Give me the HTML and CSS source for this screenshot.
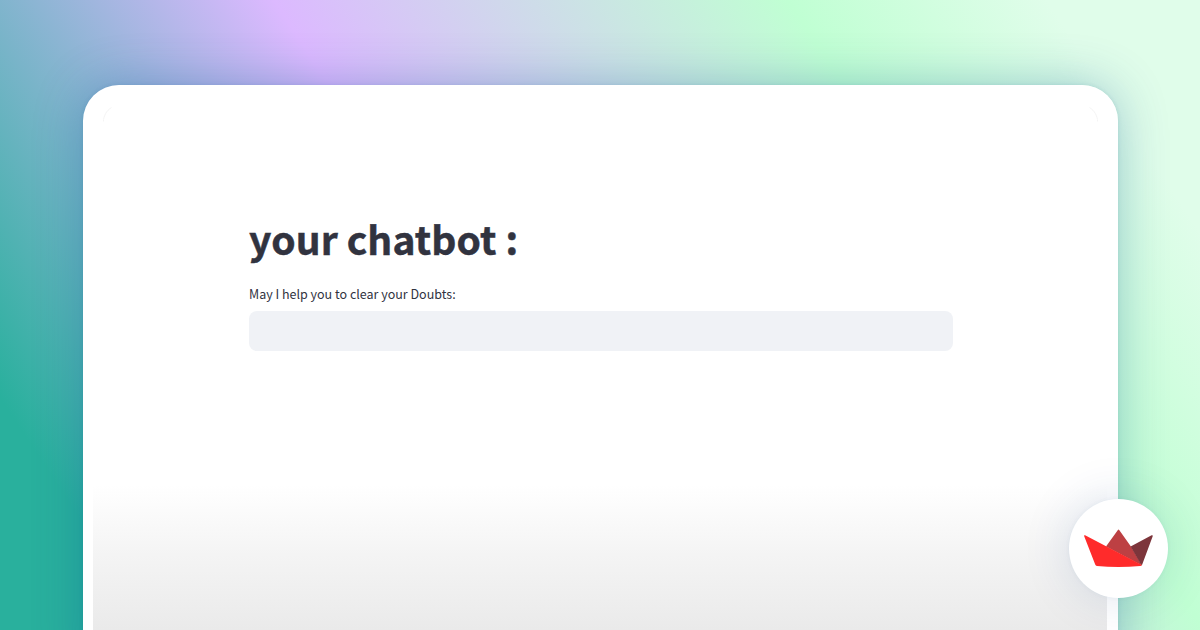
FILE: index.html
```html
<!DOCTYPE html>
<html lang="en">
<head>
    <meta charset="UTF-8">
    <meta name="viewport" content="width=device-width, initial-scale=1.0">
    <title>your chatbot</title>
    <link rel="stylesheet" href="styles.css">
</head>
<body>
    <div class="card">
        <svg class="corner corner-left" width="10" height="16" viewBox="0 0 10 16">
            <path d="M0.5 14.5 C0.5 9 3.5 3.5 8.5 0.5" />
        </svg>
        <svg class="corner corner-right" width="10" height="16" viewBox="0 0 10 16">
            <path d="M9.5 14.5 C9.5 9 6.5 3.5 1.5 0.5" />
        </svg>

        <main class="content">
            <h1>your chatbot :</h1>
            <label class="question-label" for="question">May I help you to clear your Doubts:</label>
            <input class="question" id="question" type="text">
        </main>
    </div>

    <div class="badge">
        <svg class="crown" width="70" height="40" viewBox="0 0 70 40">
            <path fill="#bd4043" d="M33.9 1 Q34.5 0.1 35.2 1 L47.1 17.8 L58 36.5 L22 17.6 Z" />
            <path fill="#7d353b" d="M46.6 17.5 L67.6 6.3 Q69.1 5.9 68.7 7.2 L58.2 35.4 Q57.8 36.5 57 35.5 Z" />
            <path fill="#ff2b2b" d="M0.2 7.2 Q-0.3 5.8 1.1 6.3 L22.1 17.3 L57.9 36 Q57.5 36.8 56.2 37 Q34.2 39 12.9 37 Q11.7 36.8 11.2 35.6 Z" />
        </svg>
    </div>
</body>
</html>
```
FILE: styles.css
```css
* {
    box-sizing: border-box;
}

html {
    overflow: hidden;
}

body {
    position: relative;
    width: 1200px;
    height: 630px;
    margin: 0;
    padding: 85px 82px 0 83px;
    overflow: hidden;
    font-family: "Source Sans Pro", "Noto Sans CJK SC", sans-serif;
    color: #31333f;
    background: linear-gradient(56.5deg, #29b09d 9.5%, #dcb9ff 42.7%, #c0ffd3 74.5%, #e0fdea 90.5%);
}

.card {
    position: relative;
    height: 600px;
    border: 10px solid #fff;
    border-right-width: 11px;
    border-radius: 36px;
    background: linear-gradient(to bottom, #fff 390px, #f4f4f4 460px, #eaeaea 535px);
    box-shadow: 0 0 50px rgba(0, 80, 150, 0.3), 0 0 4px rgba(0, 80, 130, 0.12);
}

.corner {
    position: absolute;
    top: 12px;
    fill: none;
    stroke: #f4f4f4;
}

.corner-left {
    left: 10px;
}

.corner-right {
    right: 9px;
}

.content {
    display: flex;
    flex-direction: column;
    width: 704px;
    margin-left: 156px;
    padding-top: 118px;
}

h1 {
    margin: 0;
    font-size: 39px;
    font-weight: 700;
    line-height: 51px;
    letter-spacing: 0.1px;
    -webkit-text-stroke: 0.5px #31333f;
}

.question-label {
    margin-top: 19px;
    font-size: 12.5px;
    line-height: 21px;
}

.question {
    height: 40px;
    margin-top: 7px;
    padding: 0 12px;
    border: none;
    border-radius: 8px;
    background-color: #f0f2f6;
    font: inherit;
    color: inherit;
}

.badge {
    position: absolute;
    top: 499px;
    left: 1069px;
    display: flex;
    align-items: center;
    justify-content: center;
    width: 99px;
    height: 99px;
    border-radius: 50%;
    background-color: #fff;
    box-shadow: 0 0 50px rgba(0, 60, 130, 0.14), 0 0 4px rgba(0, 60, 130, 0.06);
}
```
